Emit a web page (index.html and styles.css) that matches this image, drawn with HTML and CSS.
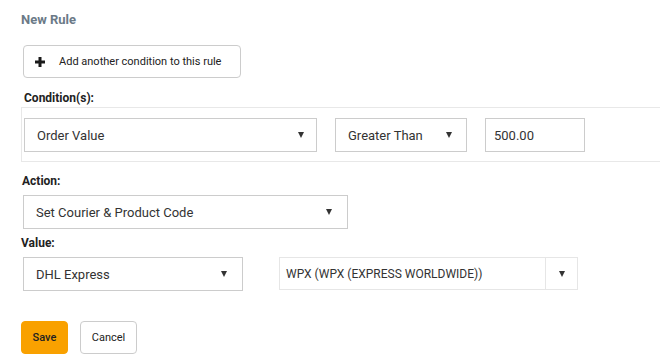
FILE: index.html
```html
<!DOCTYPE html>
<html lang="en">
<head>
    <meta name="viewport" content="width=device-width, initial-scale=1.0">
    <title>New Rule</title>
    <link rel="stylesheet" href="styles.css">
</head>
<body>
    <div class="rule-form">
        <h2>New Rule</h2>

        <button class="btn btn-add" type="button">
            <svg class="plus" width="10" height="10" viewBox="0 0 10 10">
                <path d="M3.5 0h3v3.5H10v3H6.5V10h-3V6.5H0v-3h3.5z" fill="#1a1a1a"/>
            </svg>
            <span>Add another condition to this rule</span>
        </button>

        <label class="field-label label-cond">Condition(s):</label>
        <div class="conditions">
            <div class="select sel-field">Order Value<span class="caret"></span></div>
            <div class="select sel-op">Greater Than<span class="caret"></span></div>
            <div class="input sel-val">500.00</div>
        </div>

        <label class="field-label label-action">Action:</label>
        <div class="select sel-action">Set Courier &amp; Product Code<span class="caret"></span></div>

        <label class="field-label label-value">Value:</label>
        <div class="value-row">
            <div class="select sel-courier">DHL Express<span class="caret"></span></div>
            <div class="combo">
                <span class="combo-text">WPX (WPX (EXPRESS WORLDWIDE))</span>
                <span class="combo-btn"><span class="caret"></span></span>
            </div>
        </div>

        <div class="actions">
            <button class="btn btn-save" type="button">Save</button>
            <button class="btn btn-cancel" type="button">Cancel</button>
        </div>
    </div>
</body>
</html>
```

FILE: styles.css
```css
body {
    margin: 0;
    font-family: Roboto, "Liberation Sans", sans-serif;
    color: #333;
    background: #fff;
}
.rule-form {
    padding: 10px 0 0 21px;
}
h2 {
    margin: 0;
    font-size: 13px;
    line-height: 20px;
    color: #6b7a87;
    font-weight: 700;
}
.btn {
    font-family: inherit;
    cursor: pointer;
    background: #fff;
    border: 1px solid #ccc;
    border-radius: 4px;
    color: #222;
}
.btn-add {
    display: flex;
    align-items: center;
    margin: 15px 0 0 2px;
    width: 218px;
    height: 33px;
    padding: 0 0 0 11px;
    font-size: 11px;
}
.btn-add .plus {
    margin-right: 14px;
}
.field-label {
    display: block;
    font-size: 12px;
    font-weight: 700;
    color: #222;
    line-height: 16px;
}
.label-cond {
    margin: 12px 0 0 3px;
}
.conditions {
    display: flex;
    align-items: flex-start;
    height: 53px;
    box-sizing: content-box;
    margin-top: 1px;
    padding: 0 0 0 2px;
    border: 1px solid #e8e8e8;
    border-right: none;
}
.conditions > div {
    margin-top: 10px;
}
.select,
.input {
    box-sizing: border-box;
    display: flex;
    align-items: center;
    height: 34px;
    border: 1px solid #ccc;
    font-size: 13px;
    color: #333;
    padding-left: 12px;
    background: #fff;
}
.select {
    justify-content: space-between;
    padding-right: 12px;
}
.caret {
    width: 0;
    height: 0;
    border-left: 3.5px solid transparent;
    border-right: 3.5px solid transparent;
    border-top: 6px solid #333;
}
.sel-field {
    width: 293px;
}
.sel-op {
    width: 132px;
    margin-left: 18px;
    padding-right: 14px;
}
.input {
    width: 100px;
    margin-left: 18px;
    padding-left: 8px;
}
.label-action {
    margin: 11px 0 0 1px;
}
.sel-action {
    width: 325px;
    margin: 6px 0 0 2px;
    padding-right: 15px;
}
.label-value {
    margin: 6px 0 0 0;
}
.value-row {
    display: flex;
    margin: 6px 0 0 2px;
}
.sel-courier {
    width: 220px;
    padding-right: 15px;
}
.combo {
    display: flex;
    height: 33px;
    width: 299px;
    box-sizing: border-box;
    margin-left: 36px;
    border: 1px solid #e6e6e6;
    font-size: 12px;
    color: #333;
}
.combo-text {
    flex: 1;
    display: flex;
    align-items: center;
    padding-left: 6px;
}
.combo-btn {
    display: flex;
    align-items: center;
    justify-content: center;
    width: 31px;
    border-left: 1px solid #e6e6e6;
}
.actions {
    display: flex;
    gap: 12px;
    margin-top: 30px;
}
.btn-save {
    width: 47px;
    height: 33px;
    background: #f9a100;
    border-color: #f9a100;
    font-size: 11px;
    font-weight: 500;
}
.btn-cancel {
    width: 57px;
    height: 33px;
    font-size: 11px;
}
```
